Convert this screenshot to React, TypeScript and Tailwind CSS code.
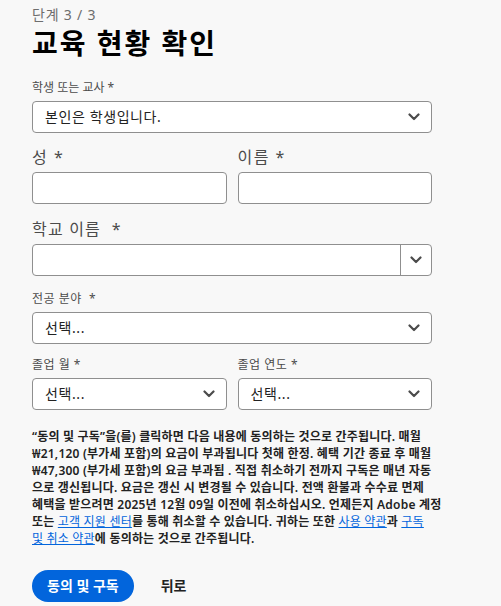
import React from "react";

const font = { fontFamily: '"Noto Sans", "Noto Sans CJK KR", sans-serif' };

function Chevron() {
  return (
    <svg width="12" height="8" viewBox="0 0 12 8" fill="none">
      <path d="M1.5 1.5 L6 6 L10.5 1.5" stroke="#4b4b4b" strokeWidth="2.2" strokeLinecap="round" strokeLinejoin="round" />
    </svg>
  );
}

function Select({ text }: { text: string }) {
  return (
    <div className="h-[32px] w-full rounded-[4px] border border-[#8f8f8f] bg-white flex items-center justify-between pl-[12px] pr-[11px]">
      <span className="text-[14px] leading-[18px] tracking-[0.6px] text-[#222]">{text}</span>
      <Chevron />
    </div>
  );
}

function Input() {
  return <div className="h-[32px] w-full rounded-[4px] border border-[#8f8f8f] bg-white" />;
}

const Link = ({ children }: { children: React.ReactNode }) => (
  <a className="text-[#0265dc] underline font-normal">{children}</a>
);

export default function App() {
  return (
    <div className="min-h-[606px] w-[501px] bg-[#f8f8f8]" style={font}>
      <div className="ml-[32px] w-[400px] pt-[6px]">
        <div className="text-[14px] leading-[18px] tracking-[0.8px] text-[#6e6e6e]">단계 3 / 3</div>
        <h1 className="text-[28px] leading-[36px] tracking-[2px] font-bold text-black mt-[1px]">교육 현황 확인</h1>

        <div className="mt-[19px] text-[12px] leading-[16px] text-[#4b4b4b]">학생 또는 교사 *</div>
        <div className="mt-[5px]">
          <Select text="본인은 학생입니다." />
        </div>

        <div className="mt-[13px] flex gap-[11px]">
          <div className="flex-1">
            <div className="text-[16px] leading-[22px] tracking-[1.5px] text-[#4b4b4b]">성 *</div>
            <div className="mt-[4px]"><Input /></div>
          </div>
          <div className="flex-1">
            <div className="text-[16px] leading-[22px] tracking-[1.5px] text-[#4b4b4b]">이름 *</div>
            <div className="mt-[4px]"><Input /></div>
          </div>
        </div>

        <div className="mt-[14px] text-[16px] leading-[22px] tracking-[1.2px] text-[#4b4b4b]">학교 이름&nbsp; *</div>
        <div className="mt-[4px] h-[32px] w-full rounded-[4px] border border-[#8f8f8f] bg-white flex">
          <div className="flex-1" />
          <div className="w-[31px] border-l border-[#8f8f8f] flex items-center justify-center">
            <Chevron />
          </div>
        </div>

        <div className="mt-[15px] text-[12px] leading-[16px] tracking-[0.5px] text-[#4b4b4b]">전공 분야&nbsp; *</div>
        <div className="mt-[5px]">
          <Select text="선택..." />
        </div>

        <div className="mt-[13px] flex gap-[11px]">
          <div className="flex-1">
            <div className="text-[12px] leading-[16px] tracking-[0.5px] text-[#4b4b4b]">졸업 월 *</div>
            <div className="mt-[5px]"><Select text="선택..." /></div>
          </div>
          <div className="flex-1">
            <div className="text-[12px] leading-[16px] tracking-[0.5px] text-[#4b4b4b]">졸업 연도 *</div>
            <div className="mt-[5px]"><Select text="선택..." /></div>
          </div>
        </div>

        <p className="mt-[18px] text-[12px] leading-[17px] tracking-[0.2px] font-semibold text-[#222] whitespace-nowrap">
          “동의 및 구독”을(를) 클릭하면 다음 내용에 동의하는 것으로 간주됩니다. 매월
          <br />
          ₩21,120 (부가세 포함)의 요금이 부과됩니다 첫해 한정. 혜택 기간 종료 후 매월
          <br />
          ₩47,300 (부가세 포함)의 요금 부과됨 . 직접 취소하기 전까지 구독은 매년 자동
          <br />
          으로 갱신됩니다. 요금은 갱신 시 변경될 수 있습니다. 전액 환불과 수수료 면제
          <br />
          혜택을 받으려면 2025년 12월 09일 이전에 취소하십시오. 언제든지 Adobe 계정
          <br />
          또는 <Link>고객 지원 센터</Link>를 통해 취소할 수 있습니다. 귀하는 또한 <Link>사용 약관</Link>과 <Link>구독</Link>
          <br />
          <Link>및 취소 약관</Link>에 동의하는 것으로 간주됩니다.
        </p>

        <div className="mt-[23px] flex items-center gap-[27px]">
          <button className="h-[32px] px-[15px] rounded-full bg-[#0265dc] text-white text-[14px] font-bold leading-[18px]">
            동의 및 구독
          </button>
          <button className="text-[14px] font-bold text-[#222] leading-[18px]">뒤로</button>
        </div>
      </div>
    </div>
  );
}
